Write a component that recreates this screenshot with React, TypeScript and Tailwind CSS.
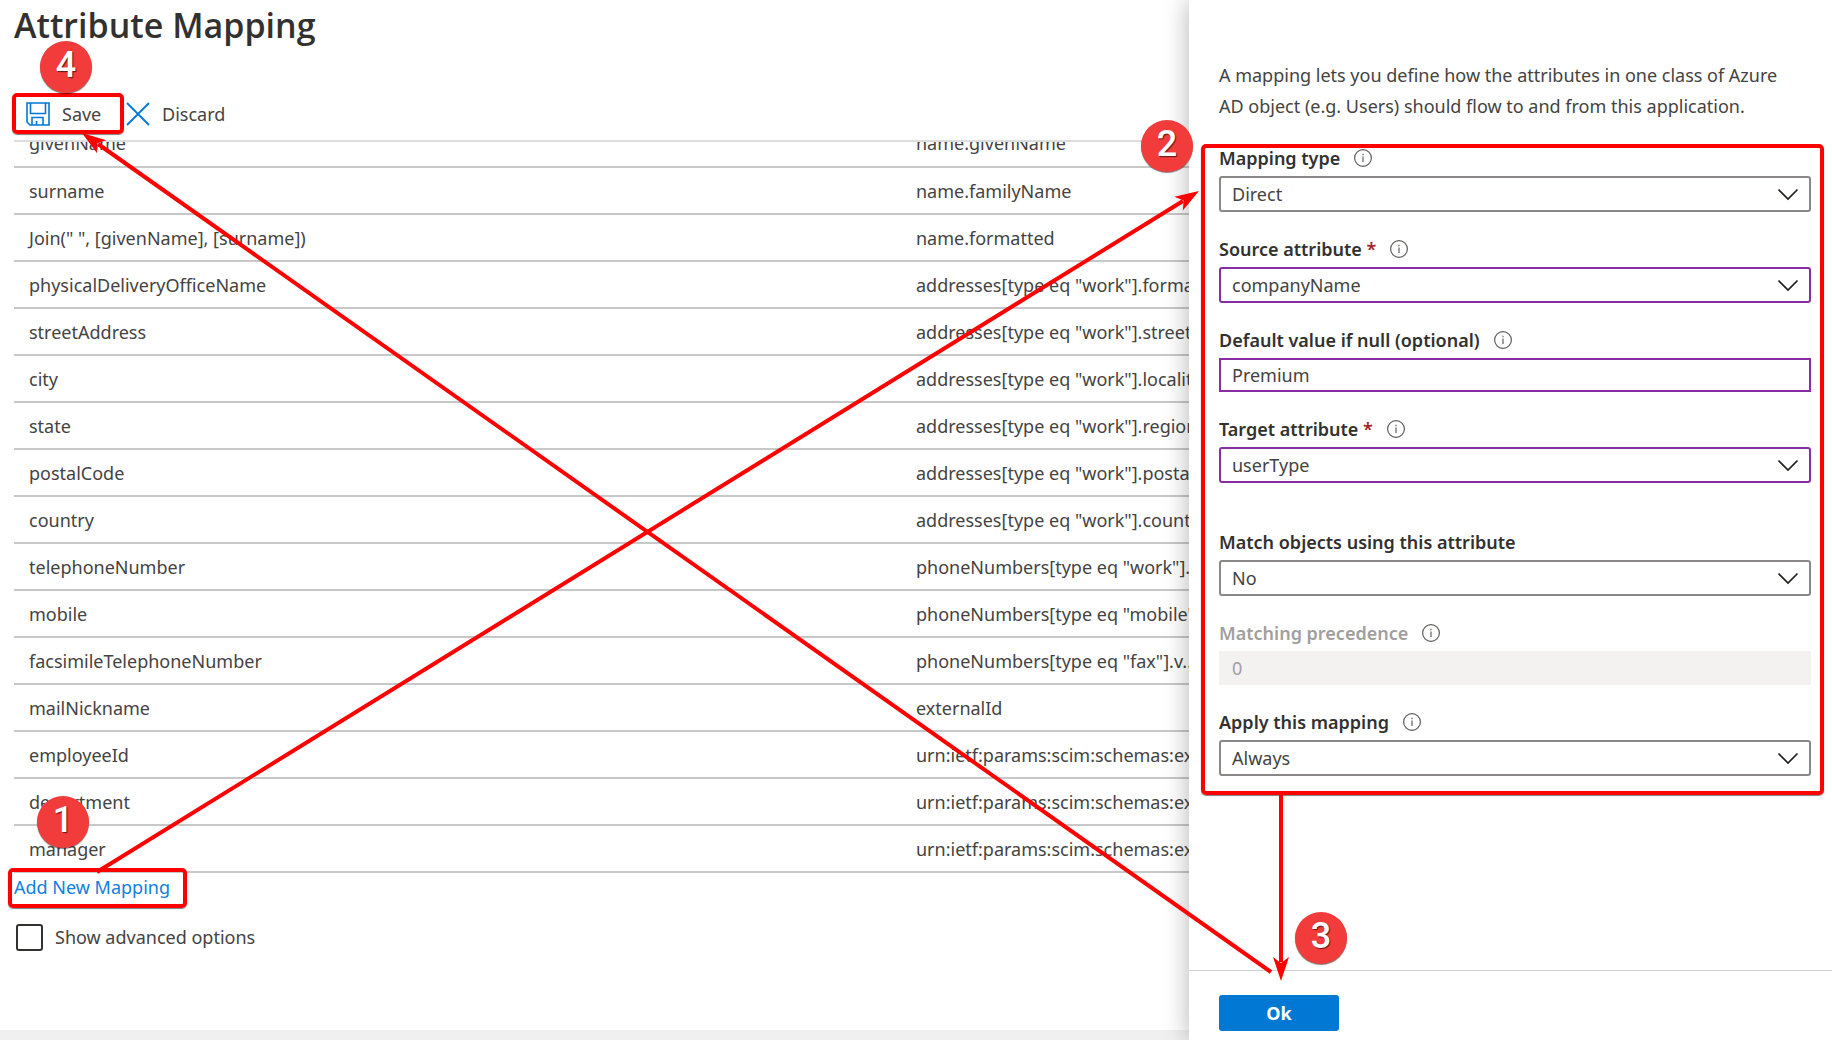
import React, { useState } from "react";

const rows: [string, string][] = [
  ["givenName", "name.givenName"],
  ["surname", "name.familyName"],
  ['Join(" ", [givenName], [surname])', "name.formatted"],
  ["physicalDeliveryOfficeName", 'addresses[type eq "work"].formatted'],
  ["streetAddress", 'addresses[type eq "work"].streetAddress'],
  ["city", 'addresses[type eq "work"].locality'],
  ["state", 'addresses[type eq "work"].region'],
  ["postalCode", 'addresses[type eq "work"].postalCode'],
  ["country", 'addresses[type eq "work"].country'],
  ["telephoneNumber", 'phoneNumbers[type eq "work"].value'],
  ["mobile", 'phoneNumbers[type eq "mobile"].value'],
  ["facsimileTelephoneNumber", 'phoneNumbers[type eq "fax"].v...'],
  ["mailNickname", "externalId"],
  ["employeeId", "urn:ietf:params:scim:schemas:extension"],
  ["department", "urn:ietf:params:scim:schemas:extension"],
  ["manager", "urn:ietf:params:scim:schemas:extension"],
];

function SaveIcon() {
  return (
    <svg width="24" height="24" viewBox="0 0 24 24" fill="none" stroke="#0078d4" strokeWidth="1.6" aria-hidden="true">
      <path d="M1 1H23V23H4L1 20Z" />
      <path d="M4.500 1V11.500H19.500V1" />
      <path d="M6 23V15.500H17V23M10.500 23V19" />
    </svg>
  );
}

function CloseIcon() {
  return (
    <svg width="24" height="24" viewBox="0 0 24 24" fill="none" stroke="#0078d4" strokeWidth="1.8" aria-hidden="true">
      <path d="M1 1L23 23M23 1L1 23" />
    </svg>
  );
}

function InfoIcon() {
  return (
    <svg width="18" height="18" viewBox="0 0 18 18" fill="none" stroke="#605e5c" strokeWidth="1.200" aria-hidden="true">
      <circle cx="9" cy="9" r="8.400" />
      <path d="M9 7.500V13" />
      <path d="M9 4.800V6.200" />
    </svg>
  );
}

function Field({
  id,
  label,
  required,
  info = true,
  disabled,
  children,
}: {
  id: string;
  label: string;
  required?: boolean;
  info?: boolean;
  disabled?: boolean;
  children: React.ReactNode;
}) {
  return (
    <div className="flex flex-col gap-1">
      <div className="flex h-7 items-center gap-3.5">
        <label htmlFor={id} className={disabled ? "font-semibold text-[#a19f9d]" : "font-semibold text-[#323130]"}>
          {label}
          {required && <span className="text-[#a4262c]"> *</span>}
        </label>
        {info && <InfoIcon />}
      </div>
      {children}
    </div>
  );
}

function Select({ id, value, changed }: { id: string; value: string; changed?: boolean }) {
  return (
    <div className="relative">
      <select
        id={id}
        defaultValue={value}
        className={
          changed
            ? "block h-9 w-full appearance-none rounded-[3px] border-2 border-[#8a2da5] bg-white pr-10 pl-[11px] text-[#444342]"
            : "block h-9 w-full appearance-none rounded-[3px] border-2 border-[#8a8886] bg-white pr-10 pl-[11px] text-[#444342]"
        }
      >
        <option>{value}</option>
      </select>
      <svg
        className="pointer-events-none absolute top-3 right-3"
        width="22"
        height="13"
        viewBox="0 0 22 13"
        fill="none"
        stroke="#201f1e"
        strokeWidth="1.700"
        aria-hidden="true"
      >
        <path d="M1.500 1.500L11 11L20.500 1.500" />
      </svg>
    </div>
  );
}

function Badge({ n, place }: { n: number; place: string }) {
  return (
    <div
      className={`absolute flex size-[52px] items-center justify-center rounded-full bg-[#f23b3b] pb-1 font-[Roboto,sans-serif] text-4xl font-medium text-white shadow-[0_1px_1px_rgba(0,0,0,0.5)] [text-shadow:1px_1px_1px_rgba(0,0,0,0.6)] ${place}`}
    >
      {n}
    </div>
  );
}

function Highlight({ place }: { place: string }) {
  return (
    <div
      className={`pointer-events-none absolute rounded-[5px] border-4 border-[#ff0000] shadow-[0_1px_1px_rgba(0,0,0,0.5)] ${place}`}
    />
  );
}

function Arrows() {
  return (
    <svg
      className="pointer-events-none absolute top-0 left-0"
      width="1832"
      height="1040"
      viewBox="0 0 1832 1040"
      aria-hidden="true"
    >
      <g stroke="#ff0000" strokeWidth="4" fill="#ff0000">
        <path d="M97 872L1183 201" />
        <path d="M1271 972L98 144" />
        <path d="M1281 795V962" />
      </g>
      <g fill="#ff0000">
        <path d="M0 0L-24 8L-18 0L-24 -8Z" transform="translate(1199 191) rotate(-31.7)" />
        <path d="M0 0L-24 8L-18 0L-24 -8Z" transform="translate(82 133) rotate(215.200)" />
        <path d="M0 0L-24 8L-18 0L-24 -8Z" transform="translate(1281 981) rotate(90)" />
      </g>
    </svg>
  );
}

export default function App() {
  const [advanced, setAdvanced] = useState(false);
  return (
    <div className="relative grid min-h-screen overflow-hidden bg-white font-['Noto_Sans','Open_Sans',sans-serif] text-lg text-[#444342]">
      <main className="col-start-1 row-start-1 flex min-w-0 flex-col">
        <div className="flex grow flex-col pr-11 pl-3.5">
          <h1 className="h-[93px] font-['Open_Sans',sans-serif] text-[34px] leading-[50px] font-semibold text-[#323130]">
            Attribute Mapping
          </h1>
          <div className="flex h-[47px] items-start gap-3">
            <button type="button" className="relative flex h-[41px] w-[100px] items-center gap-3 pl-3">
              <SaveIcon />
              Save
              <Highlight place="inset-y-0 -left-0.5 right-[-10px]" />
            </button>
            <button type="button" className="flex h-[41px] items-center gap-3">
              <CloseIcon />
              Discard
            </button>
          </div>
          <div className="overflow-hidden border-t-2 border-[#dddddd]">
            <table className="-mt-[22px] w-full table-fixed border-collapse">
              <tbody>
                {rows.map(([source, target]) => (
                  <tr key={source} className="h-[47px] border-b-2 border-[#c8c8c8]">
                    <td className="truncate px-[15px] leading-7">{source}</td>
                    <td className="truncate px-[15px] leading-7">{target}</td>
                  </tr>
                ))}
              </tbody>
            </table>
          </div>
          <div className="flex h-[50px] items-start">
            <a href="#add" className="leading-7 text-[#0f80dc]">
              Add New Mapping
            </a>
          </div>
          <label className="flex h-7 items-center gap-3 pl-0.5">
            <input
              type="checkbox"
              checked={advanced}
              onChange={(e) => setAdvanced(e.target.checked)}
              className="size-[27px] appearance-none rounded-[3px] border-2 border-[#323130] checked:bg-[#0078d4]"
            />
            Show advanced options
          </label>
        </div>
        <div className="h-2.5 bg-[#f0f0f0]" />
      </main>

      <aside className="col-start-1 row-start-1 flex w-[643px] flex-col justify-self-end bg-white shadow-[0_0_24px_rgba(0,0,0,0.3)]">
        <div className="flex grow flex-col gap-[22px] pt-15 pr-[21px] pl-[30px]">
          <p className="pr-5 leading-[31px]">
            A mapping lets you define how the attributes in one class of Azure AD object (e.g. Users) should flow to and
            from this application.
          </p>
          <form className="relative flex flex-col gap-[23px]">
            <Field id="type" label="Mapping type">
              <Select id="type" value="Direct" />
            </Field>
            <Field id="source" label="Source attribute" required>
              <Select id="source" value="companyName" changed />
            </Field>
            <Field id="default" label="Default value if null (optional)">
              <input
                id="default"
                defaultValue="Premium"
                className="h-[34px] w-full border-2 border-[#8a2da5] px-[11px] text-[#444342]"
              />
            </Field>
            <Field id="target" label="Target attribute" required>
              <Select id="target" value="userType" changed />
            </Field>
            <div className="pt-[22px]">
              <Field id="match" label="Match objects using this attribute" info={false}>
                <Select id="match" value="No" />
              </Field>
            </div>
            <Field id="precedence" label="Matching precedence" disabled>
              <input
                id="precedence"
                defaultValue="0"
                disabled
                className="h-[34px] w-full bg-[#f3f2f1] px-[13px] text-[#a19f9d]"
              />
            </Field>
            <Field id="apply" label="Apply this mapping">
              <Select id="apply" value="Always" />
            </Field>
            <Highlight place="top-0 -bottom-[19px] -left-[18px] -right-[13px]" />
          </form>
        </div>
        <footer className="flex h-[70px] items-start border-t border-[#d2d0ce] pt-6 pl-[30px]">
          <button type="button" className="h-9 w-[120px] rounded-[3px] bg-[#0078d4] font-bold text-white">
            Ok
          </button>
        </footer>
      </aside>

      <Highlight place="top-[868px] left-2 h-10 w-[179px]" />
      <Arrows />
      <Badge n={1} place="top-[796px] left-[37px]" />
      <Badge n={2} place="top-[120px] left-[1141px]" />
      <Badge n={3} place="top-[912px] left-[1295px]" />
      <Badge n={4} place="top-[41px] left-10" />
    </div>
  );
}
